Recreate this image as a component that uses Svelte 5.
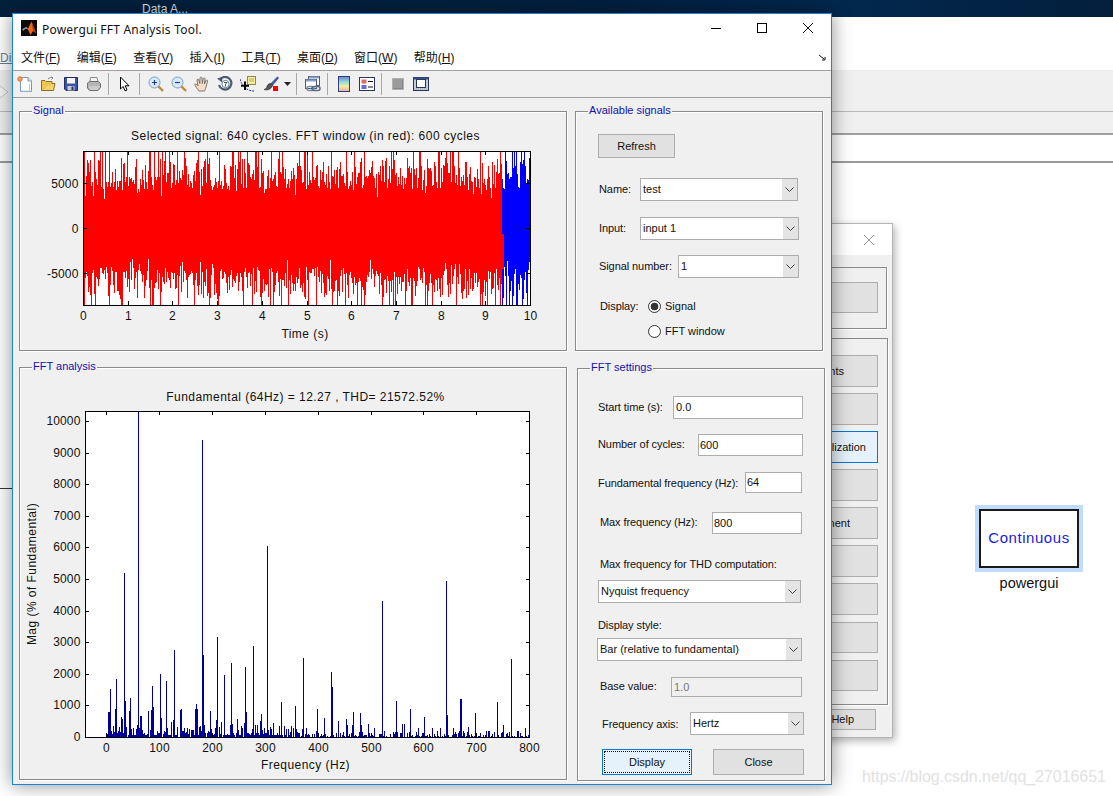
<script lang="ts">
	function rng(seed: number) {
		return () => {
			seed = (seed + 0x6d2b79f5) | 0;
			let t = Math.imul(seed ^ (seed >>> 15), 1 | seed);
			t = (t + Math.imul(t ^ (t >>> 7), 61 | t)) ^ t;
			return ((t ^ (t >>> 14)) >>> 0) / 4294967296;
		};
	}

	const menus = [
		['文件(', 'F', ')'],
		['编辑(', 'E', ')'],
		['查看(', 'V', ')'],
		['插入(', 'I', ')'],
		['工具(', 'T', ')'],
		['桌面(', 'D', ')'],
		['窗口(', 'W', ')'],
		['帮助(', 'H', ')']
	];

	// how far a column of the trace reaches from the solid band
	function reach(r: () => number) {
		const a = r();
		if (a < 0.13) return 0;
		if (a < 0.42) return 6 + r() * 14;
		if (a > 0.96) return 38 + r() * 9;
		return 20 + r() * 18;
	}

	// signal trace, one vertical stroke per pixel column
	function trace() {
		const r = rng(7);
		let red = '';
		let blue = '';
		for (let x = 84; x < 530; x++) {
			const top = 152 + reach(r);
			const bot = 305 - reach(r);
			const seg = `M${x}.5 ${top.toFixed(0)}V${bot.toFixed(0)}`;
			if (x < 502) red += seg;
			else blue += seg;
		}
		return { red, blue };
	}
	const sig = trace();

	// tall bars read off the plot: [zoom x, magnitude]
	const peaksA = [
		[265, 800], [268, 800], [271, 1530], [274, 200], [287, 880], [289, 1850], [313, 5200], [316, 1130], [304, 620],
		[307, 560], [328, 820], [331, 1250], [355, 10300], [358, 280], [361, 650], [364, 650], [385, 820], [394, 840],
		[397, 1600], [400, 940], [421, 1980], [424, 600], [439, 1760], [454, 480], [460, 550], [463, 2740], [481, 850],
		[484, 900], [526, 900], [529, 1060], [532, 880], [547, 9400], [550, 2600], [553, 370], [571, 820], [589, 530],
		[592, 3180], [604, 470], [613, 1950], [634, 2330], [637, 400], [652, 560], [673, 430], [676, 2230], [679, 780],
		[700, 2870], [706, 380], [721, 500], [724, 720], [733, 280], [742, 6050], [760, 430], [784, 1100], [793, 340]
	];
	const peaksB = [
		[16, 970], [10, 280], [37, 260], [40, 2500], [49, 300], [82, 900], [79, 180], [103, 600], [124, 2070], [127, 1570],
		[145, 500], [169, 560], [172, 370], [187, 370], [190, 780], [211, 750], [214, 370], [235, 400], [253, 300],
		[277, 4300], [316, 150], [319, 1130], [337, 410], [343, 410], [361, 900], [385, 300], [403, 630], [427, 270],
		[451, 280], [469, 4950], [472, 690], [490, 270], [511, 1200], [514, 1200], [520, 200], [535, 330], [556, 750],
		[559, 130], [595, 200], [598, 200], [622, 1100], [640, 370], [664, 2460], [706, 270]
	];

	function spectrum() {
		const r = rng(21);
		const col = new Map<number, number>();
		for (let x = 106; x < 529; x++) {
			const left = x < 300;
			const a = r();
			const b = r();
			if (a > (left ? 0.85 : 0.62)) continue;
			col.set(x, left ? 50 + b * b * 340 : 30 + b * b * 170);
		}
		for (const [z, v] of peaksA) col.set(Math.floor(20 + z / 3), v);
		for (const [z, v] of peaksB) col.set(Math.floor(290 + z / 3), v);
		let d = '';
		for (const [x, v] of col) {
			d += `M${x}.5 737V${Math.round(737 - v * 0.0316)}`;
		}
		return d;
	}
	const bars = spectrum();

	const sigX = Array.from({ length: 11 }, (_, i) => ({ x: Math.round(83 + i * 44.7), t: String(i) }));
	const sigY = [
		{ y: 183, t: '5000' },
		{ y: 228, t: '0' },
		{ y: 273, t: '-5000' }
	];
	const fftX = Array.from({ length: 9 }, (_, i) => ({ x: Math.round(106 + i * 52.9), t: String(i * 100) }));
	const fftY = Array.from({ length: 11 }, (_, i) => ({ y: Math.round(737 - i * 31.6), t: String(i * 1000) }));

	// only the tails of these buttons stick out from under the fft window
	const behind = [
		{ label: 'nts', end: 33, cls: '' },
		{ label: '', end: 0, cls: '' },
		{ label: 'lization', end: 11, cls: 'on' },
		{ label: '', end: 0, cls: '' },
		{ label: 'nent', end: 27, cls: '' },
		{ label: '', end: 0, cls: '' },
		{ label: '', end: 0, cls: '' },
		{ label: '', end: 0, cls: 'slim' },
		{ label: '', end: 0, cls: 'slim' }
	];
</script>

{#snippet chevron()}
	<svg class="chev" viewBox="0 0 9 5" width="9" height="5"><path d="M.5.5 4.5 4.5 8.5.5" fill="none" stroke="#404040" /></svg>
{/snippet}

{#snippet combo(text: string, cls: string)}
	<div class="combo {cls}">
		<span>{text}</span>
		<i class="drop">{@render chevron()}</i>
	</div>
{/snippet}

<div class="screen">
	<div class="backdrop">
		<div class="bar-dark"><span>Data A...</span></div>
		<div class="bar-menu"><u>Dis</u></div>
		<div class="bar-tools">
			<svg viewBox="0 0 10 16" width="10" height="16"><path d="M0 2 8 8 0 14" fill="#f4f4f4" stroke="#c4c4c4" /></svg>
		</div>
		<div class="bar-strip"></div>
		<div class="bar-addr"></div>
		<div class="canvas">
			<div class="stub"></div>
			<div class="block">
				<div class="block-face">Continuous</div>
				<div class="block-name">powergui</div>
			</div>
		</div>
	</div>

	<div class="dialog">
		<div class="dlg-title">
			<svg viewBox="0 0 12 12" width="12" height="12"><path d="M1 1 11 11M11 1 1 11" stroke="#9a9a9a" fill="none" /></svg>
		</div>
		<div class="dlg-top"><div class="dlg-btn tall"></div></div>
		<div class="dlg-list">
			{#each behind as b}
				<div class="dlg-btn {b.cls}" style="padding-right:{b.end}px">{b.label}</div>
			{/each}
		</div>
		<div class="dlg-btn help">Help</div>
	</div>

	<div class="fft">
		<header class="title">
			<svg class="logo" viewBox="0 0 16 16" width="16" height="16">
				<rect width="16" height="16" fill="#0a0a0a" />
				<path d="M1 9.5 5 7 7 8.5 10.5 1.5 15 13 12 11 9.5 15 7 9.5 4.5 8.5 2.5 10.5Z" fill="#e8691c" />
				<path d="M10.5 1.5 15 13 12 11 11 6Z" fill="#b8401a" />
				<path d="M1 9.5 5 7 7 8.5 4.5 8.5 2.5 10.5Z" fill="#4fa3d8" />
			</svg>
			<span class="caption">Powergui FFT Analysis Tool.</span>
			<div class="wbtns">
				<svg viewBox="0 0 10 10" width="10" height="10"><path d="M0 5.5H10" stroke="#000" /></svg>
				<svg viewBox="0 0 10 10" width="10" height="10"><rect x=".5" y=".5" width="9" height="9" fill="none" stroke="#000" /></svg>
				<svg viewBox="0 0 10 10" width="10" height="10"><path d="M0 0 10 10M10 0 0 10" stroke="#111" fill="none" /></svg>
			</div>
		</header>

		<nav class="menu">
			{#each menus as m}
				<span>{m[0]}<u>{m[1]}</u>{m[2]}</span>
			{/each}
			<svg class="dock" viewBox="0 0 7 6" width="7" height="6"><path d="M0 0 5 4M3 5H6V2" stroke="#111" fill="none" /></svg>
		</nav>

		<div class="tools">
			<button><svg viewBox="0 0 16 16"><path d="M3.500 1.500H11L14.500 5V15.500H3.500Z" fill="#fff" stroke="#7d98b8" /><path d="M11 1.500V5H14.500" fill="#dfe9f5" stroke="#7d98b8" /><path d="M12.500 8V15H5" fill="none" stroke="#b9cde4" /><circle cx="3" cy="3" r="2.200" fill="#f2a36a" stroke="#e0672a" /></svg></button>
			<button><svg viewBox="0 0 16 16"><path d="M1.500 5.500V14.500H13.500L15 7.500H5L3.500 13" fill="#f3d36e" stroke="#8e6d1c" /><path d="M1.500 14V4.500H5L6 5.500H12V7.500" fill="#ecc555" stroke="#8e6d1c" /><path d="M8 3C9.500 1.500 11.500 1 13 2M13 2 11.500 .8M13 2 11.500 3.400" fill="none" stroke="#7f7f7f" /></svg></button>
			<button><svg viewBox="0 0 16 16"><path d="M1.500 1.500H14.500V14.500H3L1.500 13Z" fill="#3f53a8" stroke="#1f2a66" /><rect x="4" y="2" width="8" height="5.500" fill="#f4f4f4" /><rect x="4.500" y="10" width="7" height="4.500" fill="#c9c9c9" /><rect x="8.500" y="10.500" width="2" height="3.500" fill="#27356f" /></svg></button>
			<button><svg viewBox="0 0 16 16"><path d="M4.500 1.500H11L12 6H4Z" fill="#f2f2f2" stroke="#8b8b8b" /><path d="M1.500 7 3.500 5.500H12.500L14.500 7.500V11.500L12 14.500H3.500L1.500 12Z" fill="#b5b5b5" stroke="#6f6f6f" /><path d="M3 11H13.500M4 13H12" stroke="#e4e4e4" /></svg></button>
			<i class="sep"></i>
			<button><svg viewBox="0 0 16 16"><path d="M3.500 1V13L6.200 10.400 8 14.800 10 14 8.200 9.800H12Z" fill="#fff" stroke="#000" stroke-linejoin="miter" /></svg></button>
			<i class="sep"></i>
			<button><svg viewBox="0 0 16 16"><path d="M9.500 9.500 15 15" stroke="#c28a2c" stroke-width="2.400" /><circle cx="6.500" cy="6.500" r="5.500" fill="#d5e8f6" stroke="#7d9fc0" /><path d="M4 6.500H9M6.500 4V9" stroke="#2a3f8f" stroke-width="1.200" /></svg></button>
			<button><svg viewBox="0 0 16 16"><path d="M9.500 9.500 15 15" stroke="#c28a2c" stroke-width="2.400" /><circle cx="6.500" cy="6.500" r="5.500" fill="#d5e8f6" stroke="#7d9fc0" /><path d="M4 6.500H9" stroke="#2a3f8f" stroke-width="1.200" /></svg></button>
			<button><svg viewBox="0 0 16 16"><path d="M5 15C3.500 13 1 10 .8 8.500 1 7.500 2.500 8 4 10L3 4C3 2.800 4.500 3 4.800 4L5.800 7.500 6 2C6.200 .8 7.800 .8 8 2L8.300 7.500 9.300 2.500C9.700 1.500 11 1.800 11 3L10.400 8 12 4.500C12.500 3.500 13.800 4 13.600 5L12 11C11.500 13 11 14 10.500 15Z" fill="#f8dcc4" stroke="#6b6b6b" stroke-width=".9" /></svg></button>
			<button><svg viewBox="0 0 16 16"><path d="M3 3.500A6.300 6.300 0 1 1 2 9" fill="none" stroke="#4a5a6e" stroke-width="2.200" /><path d="M0 2.500 5.500 1 5 6.500Z" fill="#4a5a6e" /><circle cx="8.500" cy="8" r="3.600" fill="#fff" stroke="#6a7f96" /><path d="M7 6.500H10L8.500 8V10.500" fill="none" stroke="#4a5a6e" /></svg></button>
			<button><svg viewBox="0 0 16 16"><rect x="7.500" y=".5" width="8" height="8" fill="#f7ec9e" stroke="#8f8a4a" /><path d="M9 3H14M9 5H14" stroke="#b5ad5c" /><path d="M0 3C1 7 3 10 6 12.500 8 14 11 15 14 15" fill="none" stroke="#1c2fd0" stroke-dasharray="2 1" /><path d="M5 5.500V14M1 9.800H9" stroke="#000" stroke-width="2" /></svg></button>
			<button><svg viewBox="0 0 16 16"><path d="M14.500 .8 8 7.500 9.800 9 15.500 2Z" fill="#3f5fa8" stroke="#23366f" stroke-width=".6" /><path d="M8 7.500C5 7.500 4.500 9 3.800 11 3.400 12.500 2.300 13 1 13.500 4 14.500 8 14 9.800 9Z" fill="#555" stroke="#2a2a2a" stroke-width=".6" /><rect x="10" y="10" width="5" height="5" fill="#f00" /></svg></button>
			<button class="caret"><svg viewBox="0 0 7 4" width="7" height="4"><path d="M0 0H7L3.500 4Z" fill="#222" /></svg></button>
			<i class="sep"></i>
			<button><svg viewBox="0 0 16 16"><rect x="3.500" y=".5" width="11" height="9" fill="#fff" stroke="#4c5f7a" /><path d="M4 1.500H14" stroke="#8ba2c4" stroke-width="2" /><rect x=".5" y="3.500" width="11" height="9" fill="#fff" stroke="#4c5f7a" /><path d="M1 4.500H11" stroke="#8ba2c4" stroke-width="2" /><rect x="2" y="10.500" width="7" height="4" rx="2" fill="none" stroke="#7a8ea8" stroke-width="1.500" /><rect x="7" y="10.500" width="8" height="4" rx="2" fill="none" stroke="#5a6e88" stroke-width="1.500" /></svg></button>
			<i class="sep"></i>
			<button><svg viewBox="0 0 16 16"><defs><linearGradient id="cbar" x1="0" y1="0" x2="0" y2="1"><stop offset="0" stop-color="#6f7fd8" /><stop offset=".35" stop-color="#8fd8d8" /><stop offset=".65" stop-color="#f2eea0" /><stop offset="1" stop-color="#f0a8a0" /></linearGradient></defs><rect x="2.500" y=".5" width="11" height="15" fill="url(#cbar)" stroke="#2f3f78" /></svg></button>
			<button><svg viewBox="0 0 16 16"><rect x=".5" y="1.500" width="15" height="13" fill="#fff" stroke="#27365f" /><rect x="2.500" y="3.500" width="5" height="4" fill="#e06a6a" /><rect x="2.500" y="9" width="5" height="4" fill="#6a6ae0" /><path d="M9 5.500H14M9 11H14" stroke="#111" /></svg></button>
			<i class="sep"></i>
			<button><svg viewBox="0 0 16 16"><rect x="2.500" y="2.500" width="11" height="11" fill="#9a9a9a" stroke="#b0b0b0" /><path d="M3.500 12.500H12.500V4" fill="none" stroke="#858585" /></svg></button>
			<button><svg viewBox="0 0 16 16"><rect x=".5" y="1.500" width="15" height="13" fill="#c4ccd8" stroke="#27365f" /><rect x=".5" y="1.500" width="15" height="2" fill="#3a4f88" /><rect x="3.500" y="3.500" width="9" height="8" fill="#fff" stroke="#27365f" /><path d="M1 13H15" stroke="#a0a8b4" stroke-dasharray="1 1" /></svg></button>
		</div>

		<div class="body">
			<div class="col">
				<section class="panel signal">
					<span class="legend">Signal</span>
					<svg class="plot" viewBox="20 112 546 238" width="546" height="238">
						<rect x="83" y="151" width="447" height="154" fill="#fff" />
						<path d={sig.red} stroke="#f00" fill="none" />
						<path d={sig.blue} stroke="#00f" fill="none" />
						<rect x="502" y="234" width="2" height="35" fill="#f00" />
						<rect x="83.500" y="151.500" width="447" height="154" fill="none" stroke="#000" />
						{#each sigX as t}
							<path d="M{t.x}.5 151V155M{t.x}.5 305V301" stroke="#000" />
							<text class="tick" x={t.x + 0.5} y="320" text-anchor="middle">{t.t}</text>
						{/each}
						{#each sigY as t}
							<path d="M83 {t.y}.5H87M530 {t.y}.5H526" stroke="#000" />
							<text class="tick" x="78.500" y={t.y + 4.5} text-anchor="end">{t.t}</text>
						{/each}
						<text x="305.500" y="139.500" text-anchor="middle">Selected signal: 640 cycles. FFT window (in red): 600 cycles</text>
						<text x="305" y="337.500" text-anchor="middle">Time (s)</text>
					</svg>
				</section>

				<section class="panel analysis">
					<span class="legend">FFT analysis</span>
					<svg class="plot" viewBox="20 368 546 411" width="546" height="411">
						<rect x="85" y="411" width="445" height="326" fill="#fff" />
						<path d={bars} stroke="#000099" fill="none" />
						<path d="M85.500 737.500V411.500H529.500V737.500H85.500" fill="none" stroke="#000" />
						{#each fftX as t}
							<path d="M{t.x}.5 411V415M{t.x}.5 737V733" stroke="#000" />
							<text class="tick" x={t.x + 0.5} y="752" text-anchor="middle">{t.t}</text>
						{/each}
						{#each fftY as t}
							<path d="M85 {t.y}.5H89M530 {t.y}.5H526" stroke="#000" />
							<text class="tick" x="80.500" y={t.y + 3.5} text-anchor="end">{t.t}</text>
						{/each}
						<text x="305.500" y="401" text-anchor="middle">Fundamental (64Hz) = 12.27 , THD= 21572.52%</text>
						<text x="305.500" y="769" text-anchor="middle">Frequency (Hz)</text>
						<text transform="translate(36 574) rotate(-90)" text-anchor="middle">Mag (% of Fundamental)</text>
					</svg>
				</section>
			</div>

			<div class="col right">
				<section class="panel avail">
					<span class="legend">Available signals</span>
					<div class="btn refresh">Refresh</div>
					<div class="row r-name"><label>Name:</label>{@render combo('test', 'w158')}</div>
					<div class="row r-input"><label>Input:</label>{@render combo('input 1', 'w159')}</div>
					<div class="row r-num"><label>Signal number:</label>{@render combo('1', 'w121')}</div>
					<div class="row r-disp"><label>Display:</label><i class="radio on"></i><span class="rtext">Signal</span></div>
					<div class="row r-win"><i class="radio"></i><span class="rtext">FFT window</span></div>
				</section>

				<section class="panel settings">
					<span class="legend">FFT settings</span>
					<div class="row s-start"><label>Start time (s):</label><div class="field">0.0</div></div>
					<div class="row s-cycles"><label>Number of cycles:</label><div class="field">600</div></div>
					<div class="row s-fund"><label>Fundamental frequency (Hz):</label><div class="field">64</div></div>
					<div class="row s-max"><label>Max frequency (Hz):</label><div class="field">800</div></div>
					<div class="row s-thd"><label>Max frequency for THD computation:</label></div>
					<div class="row s-nyq">{@render combo('Nyquist frequency', 'w203')}</div>
					<div class="row s-style"><label>Display style:</label></div>
					<div class="row s-bar">{@render combo('Bar (relative to fundamental)', 'w205')}</div>
					<div class="row s-base"><label>Base value:</label><div class="field off">1.0</div></div>
					<div class="row s-axis"><label>Frequency axis:</label>{@render combo('Hertz', 'w114')}</div>
					<div class="row s-acts">
						<div class="btn display"><span>Display</span></div>
						<div class="btn close">Close</div>
					</div>
				</section>
			</div>
		</div>
	</div>

	<div class="mark">https://blog.csdn.net/qq_27016651</div>
</div>

<style>
	:global(body) {
		margin: 0;
		background: #fff;
	}

	.screen {
		position: relative;
		width: 1113px;
		height: 796px;
		overflow: hidden;
		font-family: 'Liberation Sans', Arial, sans-serif;
		font-size: 11px;
		color: #111;
	}

	/* simulink model behind everything */
	.backdrop {
		display: flex;
		flex-direction: column;
		height: 100%;
	}
	.bar-dark {
		height: 17px;
		background: linear-gradient(90deg, #03203c, #012040 55%, #02284f 75%, #041f3c);
		overflow: hidden;
		color: #dfe6ee;
		font-size: 12px;
		line-height: 18px;
		padding-left: 142px;
	}
	.bar-menu {
		height: 54px;
		box-sizing: border-box;
		background: #fff;
		border-bottom: 1px solid #ececec;
		padding-top: 34px;
		color: #6f7f8f;
		font-size: 12px;
	}
	.bar-tools {
		height: 41px;
		box-sizing: border-box;
		background: #f0f0f0;
		border-bottom: 1px solid #b8b8b8;
		padding-top: 13px;
	}
	.bar-strip {
		height: 21px;
		background: #f0f0f0;
		border-bottom: 2px solid #a0a0a0;
	}
	.bar-addr {
		height: 28px;
		box-sizing: border-box;
		background: #fff;
		border-bottom: 2px solid #9a9a9a;
	}
	.canvas {
		flex: 1;
		position: relative;
		background: #fff;
	}
	.stub {
		position: absolute;
		left: 0;
		top: 325px;
		width: 12px;
		border-top: 1px solid #333;
	}
	.block {
		position: absolute;
		left: 975px;
		top: 342px;
		width: 108px;
		text-align: center;
	}
	.block-face {
		box-sizing: border-box;
		height: 67px;
		line-height: 57px;
		background: #fff;
		border: 4px solid #c0dbfb;
		box-shadow: inset 0 0 0 2px #1a1a1a;
		color: #1a1ae0;
		font-size: 15px;
		letter-spacing: 0.55px;
	}
	.block-name {
		margin-top: 3px;
		font-size: 14.500px;
		line-height: 16px;
		color: #111;
	}

	/* powergui dialog, mostly covered */
	.dialog {
		position: absolute;
		left: 700px;
		top: 223px;
		width: 193px;
		height: 515px;
		box-sizing: border-box;
		background: #f0f0f0;
		border: 1px solid #b4b4b4;
		box-shadow: 2px 3px 8px rgba(0, 0, 0, 0.3);
		display: flex;
		flex-direction: column;
		align-items: flex-end;
	}
	.dlg-title {
		align-self: stretch;
		height: 31px;
		background: #fff;
		display: flex;
		justify-content: flex-end;
		align-items: center;
		padding-right: 17px;
	}
	.dlg-top {
		box-sizing: border-box;
		width: 186px;
		height: 62px;
		margin-top: 12px;
		margin-right: 5px;
		padding: 14px 8px 0 0;
		border: 1px solid #8a8a8a;
		box-shadow: 1px 1px 0 #fff;
		display: flex;
		justify-content: flex-end;
	}
	.dlg-list {
		box-sizing: border-box;
		width: 186px;
		height: 367px;
		margin-top: 9px;
		margin-right: 4px;
		padding: 16px 9px 0 0;
		border: 1px solid #8a8a8a;
		box-shadow: 1px 1px 0 #fff;
		display: flex;
		flex-direction: column;
		align-items: flex-end;
		gap: 6px;
	}
	.dlg-btn {
		box-sizing: border-box;
		width: 175px;
		height: 32px;
		flex: none;
		line-height: 30px;
		background: #e1e1e1;
		border: 1px solid #adadad;
		text-align: right;
		font-size: 11px;
		white-space: nowrap;
	}
	.dlg-btn.tall {
		height: 31px;
	}
	.dlg-btn.on {
		background: #e5f1fb;
		border-color: #0078d7;
	}
	.dlg-btn.slim {
		height: 31px;
		margin-top: 1px;
	}
	.dlg-btn.help {
		height: 21px;
		line-height: 19px;
		margin: 4px 16px 0 0;
		padding-right: 21px;
	}

	/* fft window */
	.fft {
		position: absolute;
		left: 12px;
		top: 13px;
		width: 820px;
		height: 772px;
		box-sizing: border-box;
		background: #f0f0f0;
		border: 1px solid #1883d7;
		box-shadow: 0 0 18px rgba(0, 0, 0, 0.45);
		display: flex;
		flex-direction: column;
	}
	.title {
		height: 30px;
		background: #fff;
		display: flex;
		align-items: center;
		padding-left: 8px;
		flex: none;
	}
	.logo {
		flex: none;
		margin-bottom: 2px;
	}
	.caption {
		margin-left: 5px;
		font-family: 'Noto Sans', sans-serif;
		font-size: 12px;
		letter-spacing: 0.22px;
		color: #111;
	}
	.wbtns {
		margin-left: auto;
		margin-bottom: 2px;
		display: flex;
		gap: 36px;
		padding-right: 18px;
	}
	.menu {
		position: relative;
		height: 27px;
		box-sizing: border-box;
		background: #fff;
		border-bottom: 1px solid #a0a0a0;
		flex: none;
		display: flex;
		align-items: center;
		gap: 16.400px;
		padding: 0 0 1px 8px;
		font-family: 'Liberation Sans', 'Noto Sans CJK SC', sans-serif;
		font-size: 12px;
		color: #111;
	}
	.dock {
		position: absolute;
		right: 5px;
		top: 11px;
	}
	.tools {
		height: 27px;
		box-sizing: border-box;
		border-bottom: 1px solid #a0a0a0;
		flex: none;
		display: flex;
		align-items: center;
	}
	.tools button {
		all: unset;
		width: 23px;
		height: 16px;
		display: flex;
		justify-content: center;
		flex: none;
	}
	.tools button svg {
		width: 16px;
		height: 16px;
	}
	.tools button.caret {
		width: 11px;
		align-items: center;
	}
	.tools button.caret svg {
		width: 7px;
		height: 4px;
	}
	.sep {
		width: 1px;
		height: 22px;
		background: #a8a8a8;
		margin: 0 4px 0 3px;
		flex: none;
	}

	.body {
		flex: 1;
		display: flex;
		gap: 8px;
		padding: 13px 0 0 6px;
	}
	.col {
		display: flex;
		flex-direction: column;
		gap: 16px;
		width: 548px;
	}
	.col.right {
		width: 250px;
		gap: 17px;
	}
	.panel {
		position: relative;
		box-sizing: border-box;
		border: 1px solid #8a8a8a;
		box-shadow: inset 1px 1px 0 #fff, 1px 1px 0 #fff;
		height: 240px;
		width: 548px;
	}
	.panel.analysis {
		height: 413px;
	}
	.panel.avail {
		width: 248px;
		padding-left: 23px;
	}
	.panel.settings {
		width: 248px;
		height: 413px;
		margin-left: 2px;
		padding-left: 20px;
	}
	.legend {
		position: absolute;
		left: 12px;
		top: -9px;
		padding: 0 1px;
		background: #f0f0f0;
		color: #1212b0;
		font-size: 11px;
		line-height: 14px;
	}
	.plot {
		display: block;
		font-size: 12px;
	}
	.plot text {
		fill: #111;
		letter-spacing: 0.46px;
	}
	.plot text.tick {
		letter-spacing: 0.15px;
	}
	.plot path,
	.plot rect {
		shape-rendering: crispEdges;
	}

	.btn {
		box-sizing: border-box;
		background: #e1e1e1;
		border: 1px solid #adadad;
		display: flex;
		align-items: center;
		justify-content: center;
	}
	.refresh {
		width: 77px;
		height: 24px;
		margin: 22px 0 0 -1px;
	}
	.row {
		display: flex;
		align-items: center;
	}
	label {
		flex: none;
		white-space: nowrap;
		letter-spacing: -0.08px;
		margin-bottom: 2px;
	}
	.s-fund label,
	.s-thd label,
	.s-style label,
	.s-axis label {
		margin-bottom: 0;
	}
	.field {
		box-sizing: border-box;
		height: 100%;
		background: #fff;
		border: 1px solid #adadad;
		padding-left: 1px;
		display: flex;
		align-items: center;
	}
	.field.off {
		background: #f0f0f0;
		color: #777;
		padding-left: 2px;
	}
	.combo {
		box-sizing: border-box;
		height: 100%;
		background: #fff;
		border: 1px solid #adadad;
		display: flex;
		align-items: center;
		padding-left: 2px;
	}
	.combo span {
		margin-bottom: 2px;
	}
	.drop {
		margin-left: auto;
		align-self: stretch;
		width: 15px;
		background: #e4e4e4;
		display: flex;
		align-items: center;
		justify-content: center;
	}
	.w158 { width: 158px; }
	.w159 { width: 159px; }
	.w121 { width: 121px; }
	.w203 { width: 203px; }
	.w205 { width: 205px; }
	.w114 { width: 114px; }

	.r-name { height: 23px; margin-top: 20px; }
	.r-name label { width: 41px; }
	.r-input { height: 23px; margin-top: 16px; }
	.r-input label { width: 41px; }
	.r-num { height: 23px; margin-top: 15px; }
	.r-num label { width: 79px; }
	.r-disp { height: 13px; margin-top: 22px; padding-left: 1px; }
	.r-disp label { width: 48px; }
	.r-win { height: 13px; margin-top: 12px; padding-left: 49px; }
	.radio {
		box-sizing: border-box;
		width: 13px;
		height: 13px;
		border: 1px solid #333;
		border-radius: 50%;
		background: #fff;
		flex: none;
	}
	.radio.on {
		background: radial-gradient(circle, #333 0 3.500px, #fff 4.200px);
	}
	.rtext {
		margin: 0 0 2px 4px;
	}

	.s-start { height: 23px; margin-top: 27px; }
	.s-start label { width: 75px; }
	.s-start .field { width: 130px; padding: 0 0 2px 2px; }
	.s-cycles { height: 22px; margin-top: 15px; }
	.s-cycles label { width: 100px; }
	.s-cycles .field { width: 105px; }
	.s-fund { height: 21px; margin-top: 16px; }
	.s-fund label { width: 147px; }
	.s-fund .field { width: 57px; padding-bottom: 2px; }
	.s-max { height: 22px; margin-top: 19px; padding-left: 2px; }
	.s-max label { width: 112px; }
	.s-max .field { width: 90px; }
	.s-thd { height: 14px; margin-top: 23px; padding-left: 2px; }
	.s-nyq { height: 23px; margin-top: 9px; }
	.s-style { height: 14px; margin-top: 15px; }
	.s-bar { height: 23px; margin-top: 6px; margin-left: -1px; }
	.s-base { height: 20px; margin-top: 16px; padding-left: 2px; }
	.s-base label { width: 71px; }
	.s-base .field { width: 131px; }
	.s-axis { height: 23px; margin-top: 15px; padding-left: 4px; }
	.s-axis label { width: 88px; }
	.s-acts { height: 26px; margin-top: 14px; padding-left: 4px; gap: 21px; }
	.display {
		width: 90px;
		height: 100%;
		background: #e5f1fb;
		border-color: #0078d7;
		padding: 1px;
	}
	.display span {
		box-sizing: border-box;
		width: 100%;
		height: 100%;
		display: flex;
		align-items: center;
		justify-content: center;
		border: 1px dotted #111;
	}
	.close {
		width: 91px;
		height: 100%;
	}

	.mark {
		position: absolute;
		left: 862px;
		top: 767px;
		font-size: 16px;
		line-height: 20px;
		color: #e2e2e2;
		letter-spacing: -0.05px;
		white-space: nowrap;
	}
</style>
